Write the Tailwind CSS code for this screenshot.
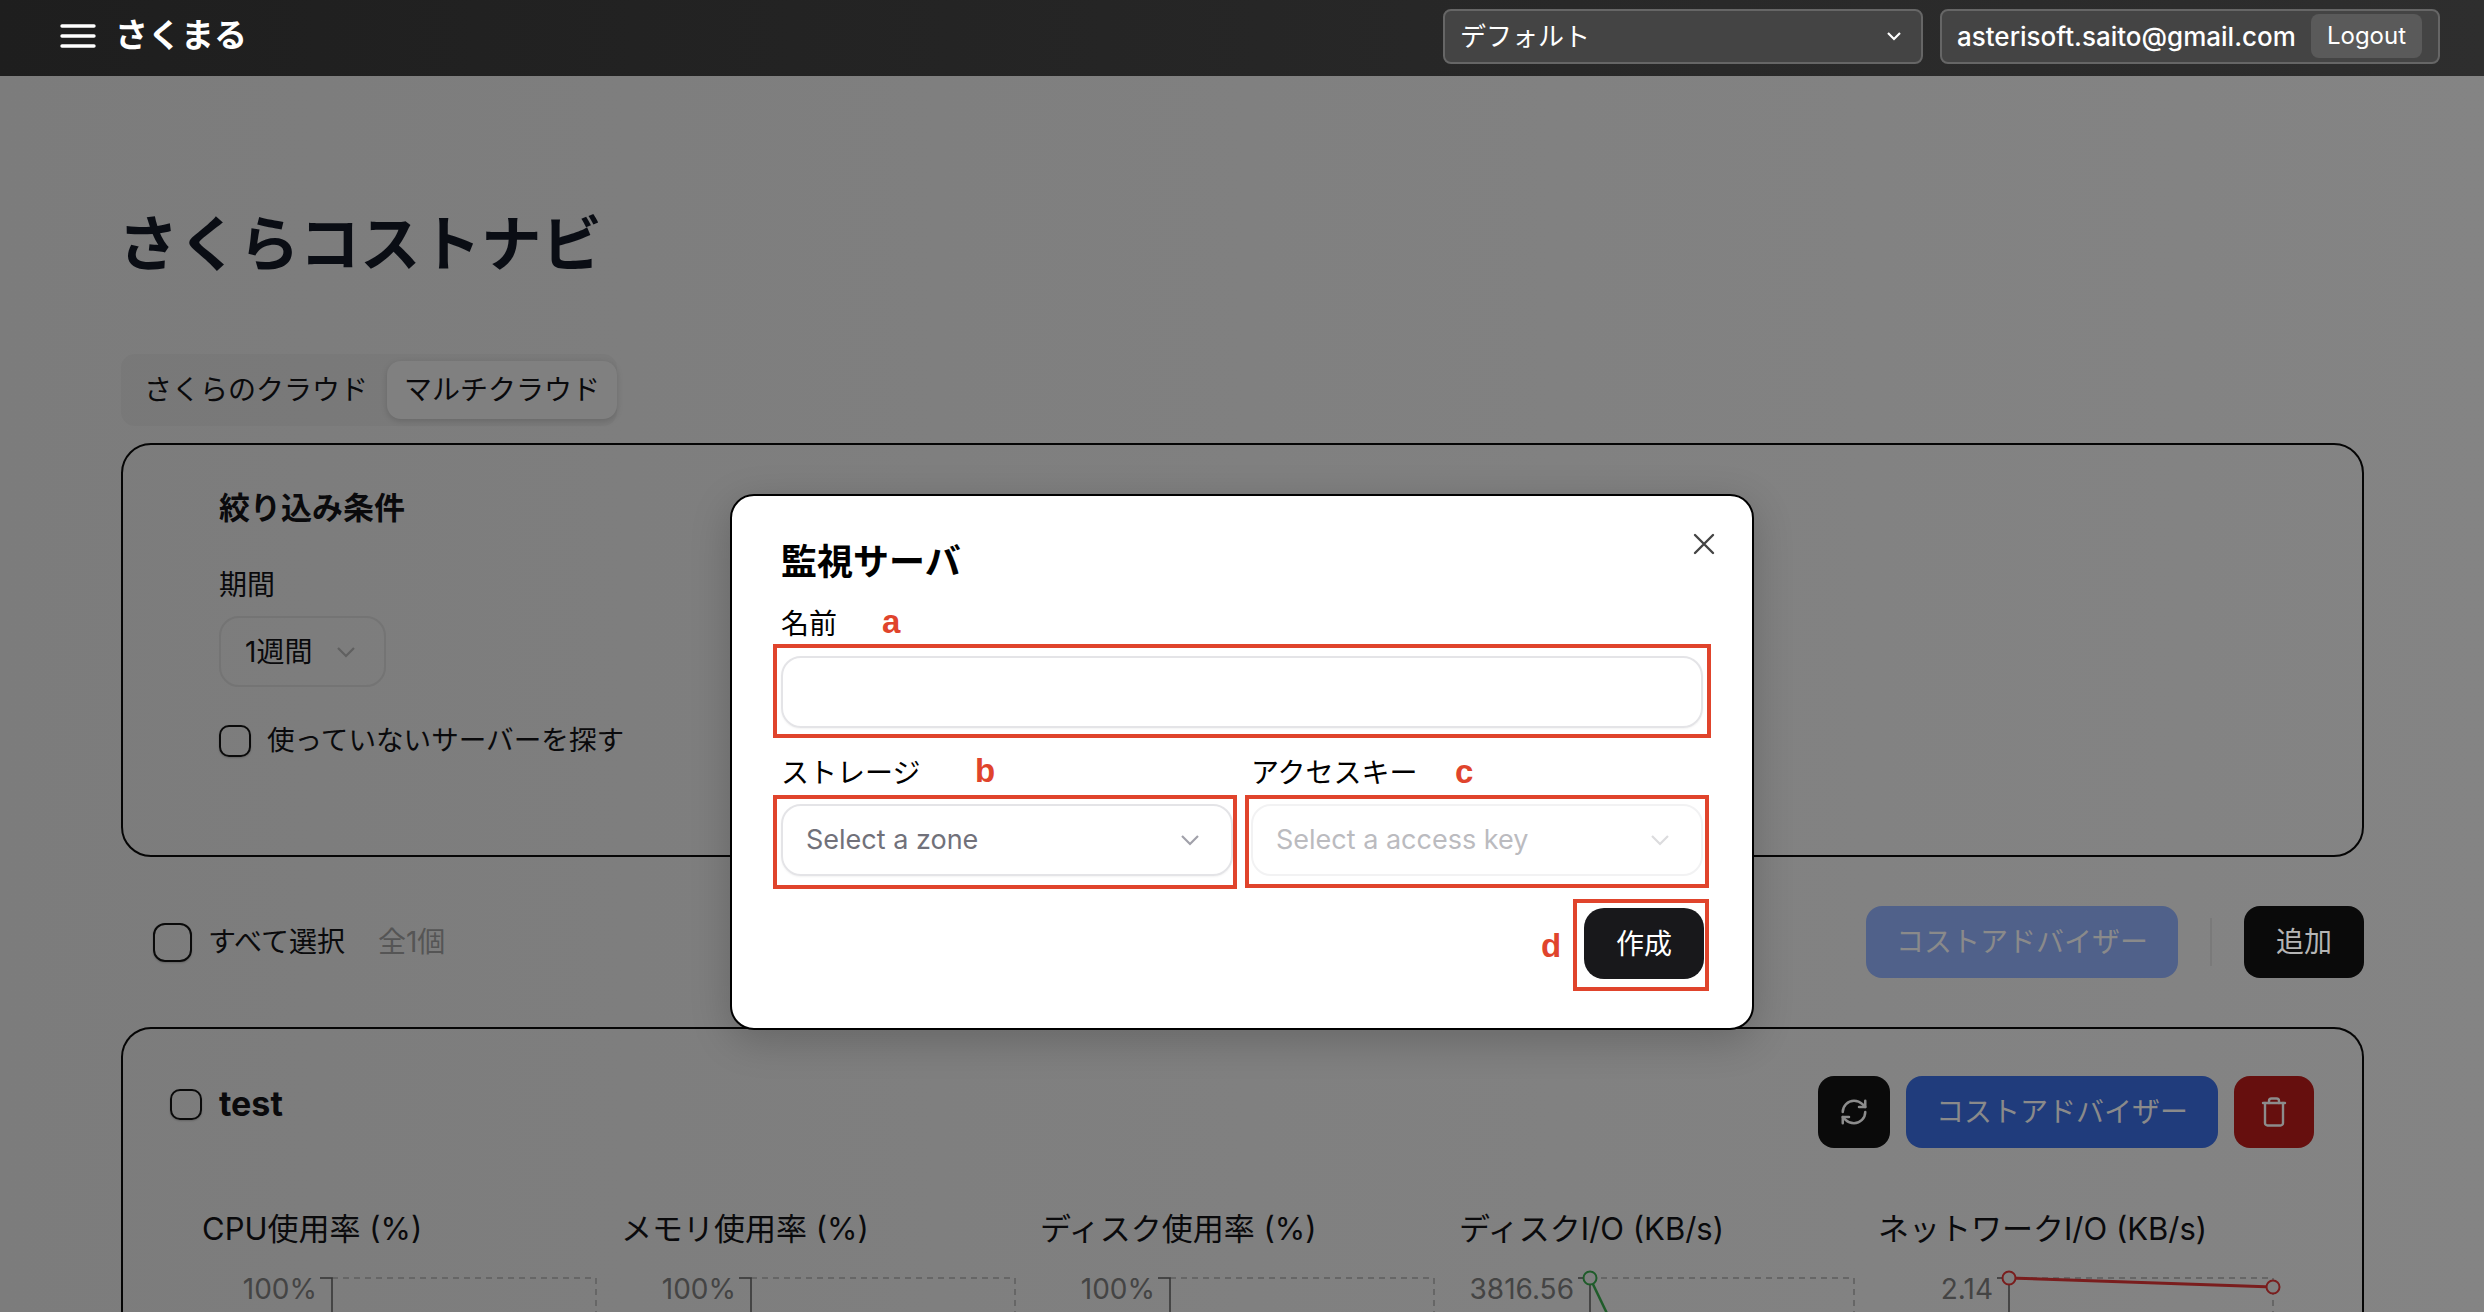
<!DOCTYPE html>
<html lang="ja">
  <head>
    <meta charset="UTF-8" />
    <title>さくらコストナビ</title>
    <script src="https://cdn.jsdelivr.net/npm/@tailwindcss/browser@4"></script>
  </head>
  <body class="relative h-[1312px] overflow-hidden bg-gradient-to-r from-[#7c7c7c] to-[#848484] text-[28px] text-[#0a0a0c] font-['Inter','Noto_Sans_CJK_JP',sans-serif]">
    <header class="flex h-[76px] items-center justify-between bg-gradient-to-r from-[#1e1e1e] to-[#2e2e2e] pb-[4px] pl-[60px] pr-[44px] text-white">
      <div class="flex items-center gap-[19px]">
        <svg class="h-[24px] w-[36px]" viewBox="0 0 36 24" fill="none" stroke="white" stroke-width="3.4" stroke-linecap="round">
          <path d="M2 2h32M2 12h32M2 22h32" />
        </svg>
        <span class="text-[33px] font-bold">さくまる</span>
      </div>
      <div class="flex items-center gap-[17px]">
        <div class="flex h-[55px] w-[480px] items-center justify-between rounded-[8px] border-2 border-[#666] bg-[#444] pl-[15px] pr-[19px] text-[26px]">
          <span>デフォルト</span>
          <svg class="h-[12px] w-[16px]" viewBox="0 0 16 12" fill="none" stroke="white" stroke-width="2.2"><path d="M2 3l6 6 6-6" /></svg>
        </div>
        <div class="flex h-[55px] w-[500px] items-center justify-between rounded-[8px] border-2 border-[#666] bg-[#444] pl-[15px] pr-[16px]">
          <span class="text-[26px] font-medium">asterisoft.saito@gmail.com</span>
          <button class="h-[44px] w-[111px] rounded-[8px] bg-[#5a5a5a] text-[24px]">Logout</button>
        </div>
      </div>
    </header>

    <main class="pl-[121px] pr-[120px]">
      <h1 class="-ml-[3px] mt-[132px] text-[60.5px] leading-[72px] font-bold text-[#0a0d14]">さくらコストナビ</h1>

      <div class="mt-[74px] flex h-[72px] w-[496px] items-center justify-between rounded-[14px] bg-black/3 pl-[23px] text-[28px]">
        <span>さくらのクラウド</span>
        <span class="flex h-[58px] w-[230px] items-center justify-center rounded-[14px] bg-[#808080] shadow-[0_2px_6px_rgba(0,0,0,0.15)]">マルチクラウド</span>
      </div>

      <section class="mt-[17px] h-[414px] rounded-[30px] border-2 border-[#050505] pl-[96px] pt-[43px]">
        <h2 class="text-[31px] leading-[40px] font-bold">絞り込み条件</h2>
        <div class="mt-[39px] leading-[36px]">期間</div>
        <div class="mt-[13px] flex h-[71px] w-[167px] items-center justify-between rounded-[20px] border-2 border-[#747474] pl-[24px] pr-[28px]">
          <span>1週間</span>
          <svg class="h-[14px] w-[20px]" viewBox="0 0 20 14" fill="none" stroke="#606060" stroke-width="2.2"><path d="M2 3l8 8 8-8" /></svg>
        </div>
        <label class="mt-[33px] flex items-center gap-[16px]">
          <span class="h-[32px] w-[32px] rounded-[10px] border-2 border-[#0a0a0a] shadow-[0_1px_2px_rgba(0,0,0,0.2)]"></span>
          <span class="text-[27.6px]">使っていないサーバーを探す</span>
        </label>
      </section>

      <div class="mt-[49px] flex h-[72px] items-center justify-between pl-[32px]">
        <div class="flex items-center">
          <span class="h-[39px] w-[39px] rounded-[12px] border-2 border-[#0a0a0a] shadow-[0_1px_2px_rgba(0,0,0,0.2)]"></span>
          <span class="ml-[16px]">すべて選択</span>
          <span class="ml-[33px] text-[#555]">全1個</span>
        </div>
        <div class="flex items-center gap-[32px]">
          <button class="h-[72px] w-[312px] rounded-[16px] bg-[#50618a] text-[#8a8a8a]">コストアドバイザー</button>
          <div class="h-[48px] w-[2px] bg-[#7a7a7a]"></div>
          <button class="h-[72px] w-[120px] rounded-[16px] bg-[#0a0a0a] text-[#b5b5b5]">追加</button>
        </div>
      </div>

      <section class="mt-[49px] h-[285px] rounded-t-[30px] border-x-2 border-t-2 border-[#050505] pt-[47px]">
        <div class="flex h-[72px] items-start justify-between pl-[47px] pr-[48px]">
          <div class="flex items-center gap-[17px] pt-[8px]">
            <span class="h-[31px] w-[32px] rounded-[10px] border-2 border-[#0a0a0a] shadow-[0_1px_2px_rgba(0,0,0,0.2)]"></span>
            <span class="text-[34px] leading-[40px] font-bold">test</span>
          </div>
          <div class="flex items-center gap-[16px]">
            <button class="flex h-[72px] w-[72px] items-center justify-center rounded-[16px] bg-[#0a0a0a]">
              <svg class="h-[30px] w-[30px]" viewBox="0 0 24 24" fill="none" stroke="#8c8c8c" stroke-width="2" stroke-linecap="round" stroke-linejoin="round">
                <path d="M3 12a9 9 0 0 1 9-9 9.75 9.75 0 0 1 6.74 2.74L21 8" /><path d="M21 3v5h-5" /><path d="M21 12a9 9 0 0 1-9 9 9.75 9.75 0 0 1-6.74-2.74L3 16" /><path d="M8 16H3v5" />
              </svg>
            </button>
            <button class="h-[72px] w-[312px] rounded-[16px] bg-[#203c7c] text-[#8a8a8a]">コストアドバイザー</button>
            <button class="flex h-[72px] w-[80px] items-center justify-center rounded-[16px] bg-[#660f0e]">
              <svg class="h-[30px] w-[26px]" viewBox="0 0 26 30" fill="none" stroke="#8c8c8c" stroke-width="2.4" stroke-linecap="round" stroke-linejoin="round">
                <path d="M2 6h22" /><path d="M8 6V4a2.5 2.5 0 0 1 2.5-2.5h5A2.5 2.5 0 0 1 18 4v2" /><path d="M4 6v20a2.5 2.5 0 0 0 2.5 2.5h13A2.5 2.5 0 0 0 22 26V6" />
              </svg>
            </button>
          </div>
        </div>

        <div class="ml-[79px] mt-[59px] grid w-[2095px] grid-cols-5">
          <div>
            <div class="text-[31px] leading-[44px]">CPU使用率 (%)</div>
            <svg class="mt-[7px] h-[54px] w-[419px]" viewBox="0 0 419 54" fill="none">
              <path d="M130 20h264v34" stroke="#666" stroke-width="2" stroke-dasharray="6 5" />
              <path d="M118 20h12v34" stroke="#333" stroke-width="1.5" />
              <text x="115" y="41" text-anchor="end" font-size="28" fill="#444">100%</text>
            </svg>
          </div>
          <div>
            <div class="text-[31px] leading-[44px]">メモリ使用率 (%)</div>
            <svg class="mt-[7px] h-[54px] w-[419px]" viewBox="0 0 419 54" fill="none">
              <path d="M130 20h264v34" stroke="#666" stroke-width="2" stroke-dasharray="6 5" />
              <path d="M118 20h12v34" stroke="#333" stroke-width="1.5" />
              <text x="115" y="41" text-anchor="end" font-size="28" fill="#444">100%</text>
            </svg>
          </div>
          <div>
            <div class="text-[31px] leading-[44px]">ディスク使用率 (%)</div>
            <svg class="mt-[7px] h-[54px] w-[419px]" viewBox="0 0 419 54" fill="none">
              <path d="M130 20h264v34" stroke="#666" stroke-width="2" stroke-dasharray="6 5" />
              <path d="M118 20h12v34" stroke="#333" stroke-width="1.5" />
              <text x="115" y="41" text-anchor="end" font-size="28" fill="#444">100%</text>
            </svg>
          </div>
          <div>
            <div class="text-[31px] leading-[44px]">ディスクI/O (KB/s)</div>
            <svg class="mt-[7px] h-[54px] w-[419px]" viewBox="0 0 419 54" fill="none">
              <path d="M131 20h264v34" stroke="#666" stroke-width="2" stroke-dasharray="6 5" />
              <path d="M119 20h12v34" stroke="#333" stroke-width="1.5" />
              <path d="M131 20l24 50" stroke="#1f5c2a" stroke-width="2.5" />
              <circle cx="131" cy="20" r="6.5" fill="#808080" stroke="#1f5c2a" stroke-width="2" />
              <text x="115" y="41" text-anchor="end" font-size="28" fill="#444">3816.56</text>
            </svg>
          </div>
          <div>
            <div class="text-[31px] leading-[44px]">ネットワークI/O (KB/s)</div>
            <svg class="mt-[7px] h-[54px] w-[419px]" viewBox="0 0 419 54" fill="none">
              <path d="M131 20h264v34" stroke="#666" stroke-width="2" stroke-dasharray="6 5" />
              <path d="M119 20h12v34" stroke="#333" stroke-width="1.5" />
              <path d="M131 20l264 9" stroke="#7a1d1d" stroke-width="3" />
              <circle cx="131" cy="20" r="6.5" fill="#808080" stroke="#7a1d1d" stroke-width="2" />
              <circle cx="395" cy="29" r="6.5" fill="#808080" stroke="#7a1d1d" stroke-width="2" />
              <text x="115" y="41" text-anchor="end" font-size="28" fill="#444">2.14</text>
            </svg>
          </div>
        </div>
      </section>
    </main>

    <!-- modal -->
    <div class="absolute left-[730px] top-[494px] h-[536px] w-[1024px] rounded-[24px] border-2 border-black bg-white px-[49px] pt-[42px] text-black shadow-[0_10px_40px_rgba(0,0,0,0.2)]">
      <svg class="absolute right-[37px] top-[37px] h-[22px] w-[22px]" viewBox="0 0 22 22" fill="none" stroke="#444" stroke-width="2.4" stroke-linecap="round"><path d="M2 2l18 18M20 2L2 20" /></svg>
      <h2 class="text-[36px] leading-[48px] font-bold">監視サーバ</h2>
      <label class="mt-[20px] block leading-[36px]">名前</label>
      <div class="mt-[14px] h-[72px] rounded-[20px] border-2 border-[#e4e4e7] shadow-[0_1px_2px_rgba(0,0,0,0.05)]"></div>
      <div class="mt-[27px] grid grid-cols-2 gap-x-[18px]">
        <label class="leading-[36px]">ストレージ</label>
        <label class="leading-[36px]">アクセスキー</label>
        <div class="mt-[13px] flex h-[72px] items-center justify-between rounded-[20px] border-2 border-[#e4e4e7] pl-[23px] pr-[31px] text-[27px] text-[#71717a] shadow-[0_1px_2px_rgba(0,0,0,0.05)]">
          <span>Select a zone</span>
          <svg class="h-[14px] w-[20px]" viewBox="0 0 20 14" fill="none" stroke="#a1a1aa" stroke-width="2.2"><path d="M2 3l8 8 8-8" /></svg>
        </div>
        <div class="mt-[13px] flex h-[72px] items-center justify-between rounded-[20px] border-2 border-[#f2f2f3] pl-[23px] pr-[31px] text-[27px] text-[#bbbbbf]">
          <span>Select a access key</span>
          <svg class="h-[14px] w-[20px]" viewBox="0 0 20 14" fill="none" stroke="#dcdcde" stroke-width="2.2"><path d="M2 3l8 8 8-8" /></svg>
        </div>
      </div>
      <div class="mt-[32px] flex justify-end">
        <button class="-mr-px h-[71px] w-[120px] rounded-[20px] bg-[#18181b] text-[28px] text-white">作成</button>
      </div>
    </div>

    <!-- red annotations -->
    <div class="absolute left-[773px] top-[644px] h-[94px] w-[938px] border-4 border-[#e0442c]"></div>
    <div class="absolute left-[773px] top-[795px] h-[94px] w-[464px] border-4 border-[#e0442c]"></div>
    <div class="absolute left-[1245px] top-[795px] h-[93px] w-[464px] border-4 border-[#e0442c]"></div>
    <div class="absolute left-[1573px] top-[899px] h-[92px] w-[136px] border-4 border-[#e0442c]"></div>
    <span class="absolute left-[882px] top-[605px] text-[33px] leading-none font-bold text-[#e0442c] font-['Liberation_Sans',sans-serif]">a</span>
    <span class="absolute left-[975px] top-[754px] text-[33px] leading-none font-bold text-[#e0442c] font-['Liberation_Sans',sans-serif]">b</span>
    <span class="absolute left-[1455px] top-[755px] text-[33px] leading-none font-bold text-[#e0442c] font-['Liberation_Sans',sans-serif]">c</span>
    <span class="absolute left-[1541px] top-[929px] text-[33px] leading-none font-bold text-[#e0442c] font-['Liberation_Sans',sans-serif]">d</span>
  </body>
</html>
